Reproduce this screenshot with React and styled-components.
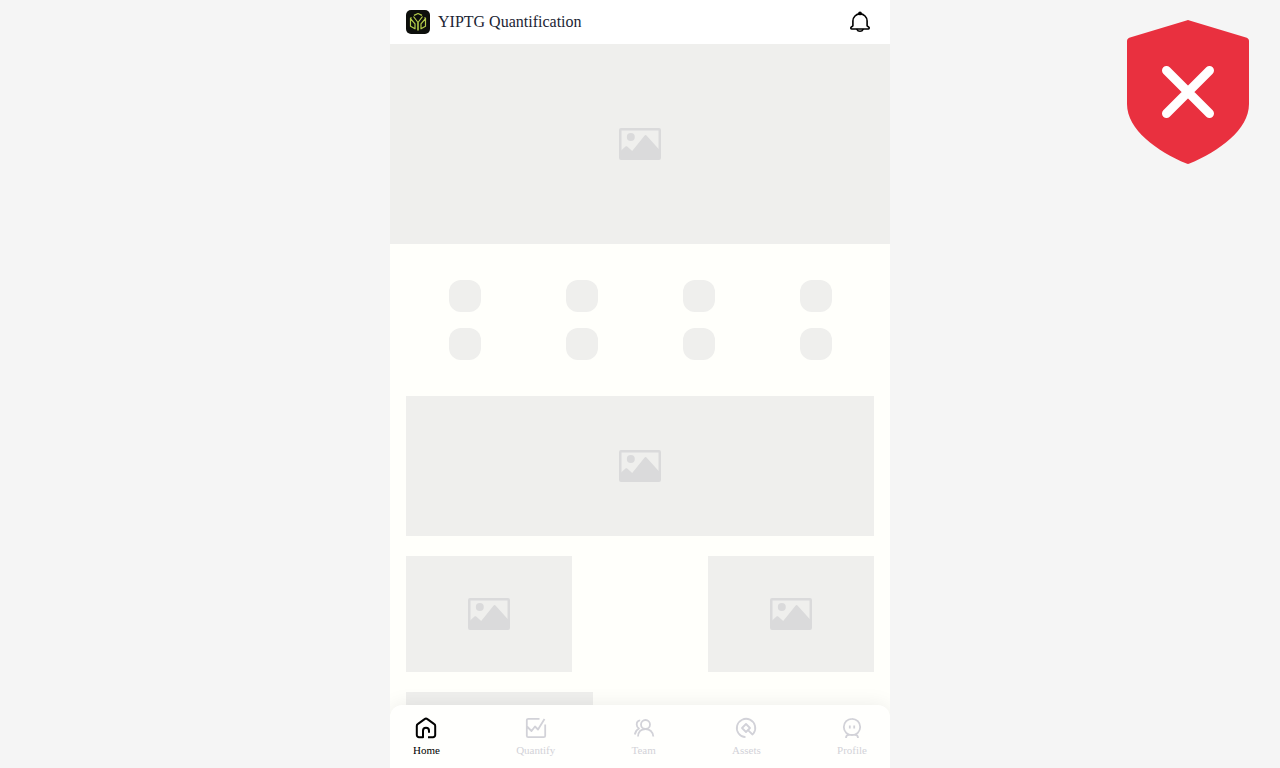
import React from "react";
import styled, { createGlobalStyle } from "styled-components";

const GlobalStyle = createGlobalStyle`
  * {
    box-sizing: border-box;
  }

  body {
    margin: 0;
    background: #f5f5f5;
    font-family: "Liberation Serif", "Times New Roman", serif;
  }
`;

const Page = styled.div`
  display: flex;
  flex-direction: column;
  max-width: 500px;
  height: 100vh;
  margin: 0 auto;
  background: #fffffb;
`;

const Header = styled.header`
  display: flex;
  flex: none;
  align-items: center;
  height: 44px;
  padding: 0 18px 0 16px;
  background: #fff;
`;

const Title = styled.h1`
  flex: 1;
  margin: 0 0 0 8px;
  color: #1b2433;
  font-size: 16px;
  font-weight: 400;
  line-height: 24px;
`;

const BellButton = styled.button`
  display: flex;
  padding: 0;
  border: 0;
  background: none;
  color: #000;
  cursor: pointer;
`;

const Content = styled.main`
  flex: 1;
  min-height: 0;
  overflow-y: auto;
  scrollbar-width: none;
`;

const Placeholder = styled.div`
  display: flex;
  align-items: center;
  justify-content: center;
  width: ${(props) => props.$width || "100%"};
  height: ${(props) => props.$height};
  background: #efefed;
  color: #dadadb;
`;

const Body = styled.div`
  display: flex;
  flex-direction: column;
  gap: 20px;
  padding: 36px 16px 20px;
`;

const Shortcuts = styled.div`
  display: grid;
  grid-template-columns: repeat(4, 1fr);
  justify-items: center;
  row-gap: 16px;
  margin-bottom: 16px;
`;

const Shortcut = styled.div`
  width: 32px;
  height: 32px;
  border-radius: 12px;
  background: #efefed;
`;

const CardRow = styled.div`
  display: flex;
  justify-content: space-between;
`;

const TabBar = styled.nav`
  position: relative;
  display: flex;
  flex: none;
  justify-content: space-between;
  height: 63px;
  padding: 11px 23px 0;
  border-radius: 12px 12px 0 0;
  background: #fffffd;
  box-shadow: 0 0 20px rgba(0, 0, 0, 0.08);
  clip-path: inset(-24px 0 0 0);
`;

const Tab = styled.a`
  display: flex;
  flex-direction: column;
  align-items: center;
  gap: 3px;
  color: ${(props) => (props.$active ? "#000" : "#d2d2d8")};
  font-size: 11px;
  line-height: 14px;
  text-decoration: none;
`;

const Shield = styled.svg`
  position: fixed;
  top: 20px;
  right: 31px;
`;

const Logo = () => (
  <svg width="24" height="24" viewBox="0 0 24 24" fill="none">
    <rect width="24" height="24" rx="5" fill="#0d0f0c" />
    <g stroke="#b4cc4a" strokeWidth="1.2" strokeLinejoin="round">
      <path d="M8 5.400 12 3.500l4 1.900M5.500 7.500 4.500 8.200v8l4.500 2.600v-5L4.800 9M18.500 7.500l1 .7v8L15 18.800v-5L19.200 9" />
      <path d="M7.500 6.500 12 12.500l4.500-6" />
      <path d="M12 12.500v8" strokeWidth="1.600" />
    </g>
  </svg>
);

const Bell = () => (
  <svg width="24" height="24" viewBox="0 0 24 24" fill="none" stroke="currentColor" strokeWidth="1.6" strokeLinecap="round" strokeLinejoin="round">
    <path d="M4.900 15.800V11a7.100 7.100 0 0 1 14.200 0v4.800l1.700 1.400c.8.700.4 1.800-.6 1.800H3.800c-1 0-1.400-1.100-.6-1.800Z" />
    <path d="M9 19.500c.5 1.300 1.600 1.700 3 1.700s2.500-.4 3-1.700" />
    <circle cx="12" cy="3.400" r="1.900" fill="currentColor" stroke="none" />
  </svg>
);

const Photo = () => (
  <svg width="44" height="34" viewBox="0 0 44 34" fill="none">
    <rect x="2" y="2" width="40" height="30" rx="1" stroke="currentColor" strokeWidth="2" />
    <rect x="3" y="3" width="38" height="28" stroke="currentColor" strokeWidth="1" />
    <circle cx="12.800" cy="10" r="4" fill="currentColor" />
    <path d="M2 24.500 7.500 19.500c.6-.5 1.100-.5 1.700 0l5 4.500L26.500 8.700c.7-.8 1.500-.8 2.200 0L42 23.500V32H2Z" fill="currentColor" />
  </svg>
);

const tabs = [
  {
    name: "Home",
    icon: <path d="M14 21.200h5a2.200 2.200 0 0 0 2.200-2.200V9.900c0-.8-.3-1.400-.9-1.800l-6.900-5a2.300 2.300 0 0 0-2.800 0L3.700 8.100c-.6.400-.9 1-.9 1.800V19A2.200 2.200 0 0 0 5 21.200h4v-6.400a3 3 0 0 1 6 0v2" />,
  },
  {
    name: "Quantify",
    icon: <path d="M15.500 2.800H4.300c-.8 0-1.500.7-1.500 1.500v15.400c0 .8.7 1.500 1.500 1.500h15.400c.8 0 1.500-.7 1.500-1.500V8.500M3 10.500l4.500 4.500 3.500-4.500 3 3L20.500 3" />,
  },
  {
    name: "Team",
    icon: (
      <>
        <circle cx="13.500" cy="8.500" r="4.500" />
        <path d="M6 20.500c.3-4.500 3-7.300 7.500-7.300s7.200 2.800 7.800 7.300M8.200 4.300C6 4.500 4.700 6.500 4.700 8.500c0 1.800.8 3.200 2.300 4C4.600 13.700 3.300 15.800 2.800 18.500" />
      </>
    ),
  },
  {
    name: "Assets",
    icon: <path d="M11.500 21.200A9.200 9.200 0 1 1 19.500 17.400l-1 1.100-4.500-4.300M12 8l4 4-4 4-4-4Z" />,
  },
  {
    name: "Profile",
    icon: <path d="M12 2.800a8.200 8.200 0 1 1 0 16.400 8.200 8.200 0 0 1 0-16.400M9.800 9.500v3M14.200 9.500v3M6 22c0-2 1-3.200 3-3.200h6c2 0 3 1.200 3 3.200" />,
  },
];

const App = () => (
  <>
    <GlobalStyle />
    <Page>
      <Header>
        <Logo />
        <Title>YIPTG Quantification</Title>
        <BellButton type="button" aria-label="Notifications">
          <Bell />
        </BellButton>
      </Header>
      <Content>
        <Placeholder $height="200px">
          <Photo />
        </Placeholder>
        <Body>
          <Shortcuts>
            {Array.from({ length: 8 }, (_, i) => (
              <Shortcut key={i} />
            ))}
          </Shortcuts>
          <Placeholder $height="140px">
            <Photo />
          </Placeholder>
          <CardRow>
            <Placeholder $width="166px" $height="116px">
              <Photo />
            </Placeholder>
            <Placeholder $width="166px" $height="116px">
              <Photo />
            </Placeholder>
          </CardRow>
          <Placeholder $width="40%" $height="16px" />
        </Body>
      </Content>
      <TabBar>
        {tabs.map((tab, i) => (
          <Tab key={tab.name} href={"#" + tab.name.toLowerCase()} $active={i === 0}>
            <svg width="24" height="24" viewBox="0 0 24 24" fill="none" stroke="currentColor" strokeWidth={i === 0 ? 2 : 1.8} strokeLinejoin="round">
              {tab.icon}
            </svg>
            {tab.name}
          </Tab>
        ))}
      </TabBar>
    </Page>
    <Shield width="122" height="144" viewBox="0 0 122 144" fill="none">
      <path d="M59.500.4Q61-.2 62.500.4L119 17.500Q122 18.500 122 21V84C122 110 92 131 62.500 143.600Q61 144.400 59.500 143.600C30 131 0 110 0 84V21Q0 18.500 3 17.500Z" fill="#e9303f" />
      <path d="M39.500 50.500 82.500 93.500M82.500 50.500 39.500 93.500" stroke="#fff" strokeWidth="9" strokeLinecap="round" />
    </Shield>
  </>
);

export default App;
